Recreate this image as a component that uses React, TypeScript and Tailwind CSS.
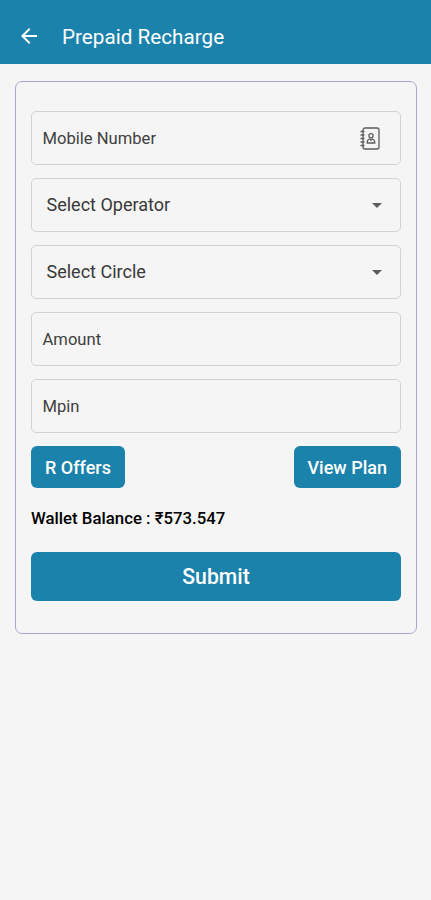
import React from 'react';

interface FieldProps {
  label: string;
  icon?: React.ReactNode;
}

interface SelectFieldProps {
  label: string;
}

function ContactsIcon() {
  return (
    <svg width="20" height="23" viewBox="0 0 20 23" fill="none" stroke="#5c5c5c" strokeWidth="1.3">
      <rect x="3" y="1" width="16" height="21" rx="2" />
      <path d="M0.5 4.5h4M0.5 8h4M0.5 11.5h4M0.5 15h4M0.5 18.5h4" strokeWidth="1.5" />
      <circle cx="11" cy="8.7" r="2.1" />
      <path d="M7.3 16v-1.2c0-1.6 1.2-2.4 2.5-2.8l1.2 1.2 1.2-1.2c1.3.4 2.5 1.2 2.5 2.8V16z" />
    </svg>
  );
}

function TextField({ label, icon }: FieldProps) {
  return (
    <div className="flex h-[54px] items-center justify-between rounded-[5px] border border-[#d2d2d4] pr-5 pl-[10.5px]">
      <span className="pt-0.5 text-[16.6px] text-[#404040]">{label}</span>
      {icon}
    </div>
  );
}

function SelectField({ label }: SelectFieldProps) {
  return (
    <div className="flex h-[54px] items-center justify-between rounded-[5px] border border-[#d2d2d4] pr-[18.5px] pl-[14.5px]">
      <span className="pb-0.5 text-[18px] text-[#383838]">{label}</span>
      <svg width="10" height="5" viewBox="0 0 10 5" fill="#5c5c5c">
        <path d="M0 0h10L5 5z" />
      </svg>
    </div>
  );
}

export default function App() {
  return (
    <div className="min-h-screen bg-[#f5f5f5] font-['Roboto',sans-serif]">
      <header className="flex h-16 items-center bg-[#1b82ab] pt-2 pl-[21px] text-white">
        <svg width="16" height="16" viewBox="4 4 16 16" fill="currentColor">
          <path d="M20 11H7.83l5.59-5.59L12 4l-8 8 8 8 1.41-1.41L7.83 13H20v-2z" />
        </svg>
        <h1 className="ml-[25px] pt-1 text-[20.7px]">Prepaid Recharge</h1>
      </header>

      <main className="pt-[17px] pr-[14px] pl-[15px]">
        <div className="h-[553px] rounded-[7px] border border-[#aaa6d2] px-[15px] pt-[29px]">
          <div className="flex flex-col gap-[13px]">
            <TextField label="Mobile Number" icon={<ContactsIcon />} />
            <SelectField label="Select Operator" />
            <SelectField label="Select Circle" />
            <TextField label="Amount" />
            <TextField label="Mpin" />
          </div>

          <div className="mt-[13px] flex justify-between pr-[0.5px]">
            <button className="h-[42px] w-[94px] rounded-[6px] bg-[#1b82ab] pt-px text-[18px] font-medium text-white">
              R Offers
            </button>
            <button className="h-[42px] w-[106.5px] rounded-[6px] bg-[#1b82ab] pt-px text-[18px] font-medium text-white">
              View Plan
            </button>
          </div>

          <p className="mt-[18px] text-[16.8px] leading-6 font-medium text-black">Wallet Balance : ₹573.547</p>

          <button className="mt-[21.5px] h-[49px] w-full rounded-[6px] bg-[#1b82ab] pt-0.5 text-[21.2px] font-medium text-white">
            Submit
          </button>
        </div>
      </main>
    </div>
  );
}
